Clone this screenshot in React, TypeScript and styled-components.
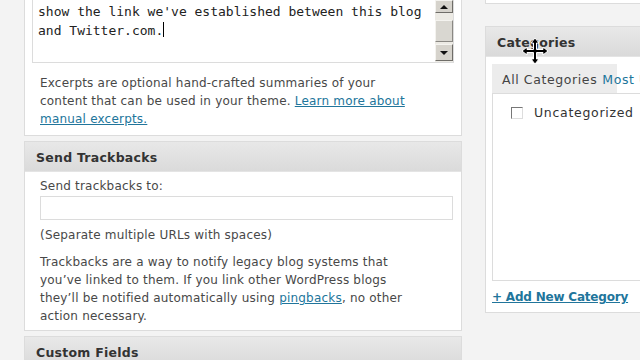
import React from "react";
import styled, { createGlobalStyle } from "styled-components";

const Global = createGlobalStyle`
  html, body { margin: 0; padding: 0; background: #f3f3f3; overflow: hidden; }
  body { font-family: "DejaVu Sans", Verdana, sans-serif; color: #333; }
`;

const Page = styled.div`
  display: flex;
  align-items: flex-start;
  gap: 23px;
  padding-left: 24px;
  width: 640px;
  height: 360px;
  overflow: hidden;
  box-sizing: border-box;
`;

const LeftCol = styled.div`
  width: 438px;
  flex: none;
  display: flex;
  flex-direction: column;
  gap: 5px;
`;

const RightCol = styled.div`
  flex: none;
  width: 200px;
  display: flex;
  flex-direction: column;
  gap: 22px;
`;

const Panel = styled.div<{ $noTop?: boolean }>`
  background: #fff;
  border: 1px solid #dcdcdc;
  border-top: ${(p) => (p.$noTop ? "none" : "1px solid #dcdcdc")};
  box-sizing: border-box;
`;

const PanelHeader = styled.div`
  height: 30px;
  display: flex;
  align-items: center;
  padding-left: 11px;
  padding-top: 2px;
  box-sizing: border-box;
  background: linear-gradient(#e8e8e8, #dadada);
  border-bottom: 1px solid #e4e4e4;
  font-weight: bold;
  font-size: 12.5px;
  letter-spacing: 0.25px;
  color: #333;
`;

const TextAreaBox = styled.div`
  margin: 0 7px 0 7px;
  display: flex;
  border: 1px solid #dcdcdc;
  border-top: none;
`;

const TextAreaText = styled.div`
  flex: 1;
  padding: 2px 0 21px 5px;
  font-family: "DejaVu Sans Mono", monospace;
  font-size: 13px;
  line-height: 19px;
  color: #222;
`;

const Caret = styled.span`
  display: inline-block;
  width: 1px;
  height: 15px;
  background: #000;
  vertical-align: -2px;
`;

const ScrollBar = styled.div`
  width: 18px;
  display: flex;
  flex-direction: column;
  background: #eceae4;
  padding-bottom: 1px;
`;

const ScrollBtn = styled.div<{ $h: number }>`
  height: ${(p) => p.$h}px;
  box-sizing: border-box;
  background: #d6d3cc;
  border: 1px solid;
  border-color: #f4f3ef #6f6d68 #6f6d68 #f4f3ef;
  display: flex;
  align-items: center;
  justify-content: center;
`;

const Thumb = styled.div`
  height: 22px;
  margin: 7px 0 2px;
  box-sizing: border-box;
  background: #d9d7d1;
  border: 1px solid;
  border-color: #f4f3ef #8a8883 #8a8883 #f4f3ef;
`;

const Arrow = styled.div<{ $up?: boolean }>`
  width: 0;
  height: 0;
  border-left: 4px solid transparent;
  border-right: 4px solid transparent;
  ${(p) => (p.$up ? "border-bottom: 4px solid #111;" : "border-top: 4px solid #111;")}
`;

const Body = styled.div<{ $pad: string; $ls: number }>`
  padding: ${(p) => p.$pad};
  font-size: 12px;
  letter-spacing: ${(p) => p.$ls}px;
  color: #484848;
  white-space: nowrap;
`;

const Para = styled.p<{ $mt?: number }>`
  margin: ${(p) => p.$mt ?? 0}px 0 0;
  line-height: 18px;
`;

const Link = styled.a`
  color: #21759b;
  text-decoration: underline;
`;

const Input = styled.div`
  height: 24px;
  margin: 1px 0 0;
  border: 1px solid #dcdcdc;
  box-sizing: border-box;
  background: #fff;
`;

const TopStub = styled(Panel)`
  height: 4px;
  border-top: none;
  margin-right: -20px;
`;

const CatPanel = styled(Panel)`
  position: relative;
  margin-right: -20px;
  height: 287px;
`;

const CatBody = styled.div`
  padding: 7px 0 0 6px;
`;

const Tabs = styled.div`
  display: flex;
  align-items: center;
  height: 29px;
  white-space: nowrap;
  font-size: 12.5px;
  letter-spacing: 0.6px;
  padding-top: 1px;
  box-sizing: border-box;
  background: linear-gradient(to right, #ececec 125px, transparent 125px);
`;

const Tab = styled.span<{ $active?: boolean }>`
  padding-left: ${(p) => (p.$active ? "10px" : "5px")};
  color: ${(p) => (p.$active ? "#444" : "#21759b")};
`;

const TabPanel = styled.div`
  height: 188px;
  border: 1px solid #dcdcdc;
  border-right: none;
  box-sizing: border-box;
  padding: 11px 0 0 18px;
`;

const CheckRow = styled.label`
  display: flex;
  align-items: center;
  gap: 11px;
  font-size: 12.5px;
  letter-spacing: 0.7px;
  color: #333;
  white-space: nowrap;
`;

const Box = styled.span`
  width: 12px;
  height: 12px;
  box-sizing: border-box;
  border: 1px solid #777;
  border-right-color: #ddd;
  border-bottom-color: #ddd;
  background: #fff;
`;

const AddLink = styled.a`
  display: block;
  margin-top: 9px;
  font-weight: bold;
  font-size: 12px;
  letter-spacing: -0.2px;
  color: #21759b;
  text-decoration: underline;
  white-space: nowrap;
`;

const MoveCursor = styled.svg`
  position: absolute;
  left: 34px;
  top: 10px;
`;

export default function App() {
  return (
    <>
      <Global />
      <Page>
        <LeftCol>
          <Panel $noTop>
            <TextAreaBox>
              <TextAreaText>
                show the link we've established between this blog
                <br />
                and Twitter.com.<Caret />
              </TextAreaText>
              <ScrollBar>
                <ScrollBtn $h={13}>
                  <Arrow $up />
                </ScrollBtn>
                <Thumb />
                <ScrollBtn $h={17}>
                  <Arrow />
                </ScrollBtn>
              </ScrollBar>
            </TextAreaBox>
            <Body $pad="3px 8px 7px 15px" $ls={0.2}>
              <Para $mt={8}>
                Excerpts are optional hand-crafted summaries of your
                <br />
                content that can be used in your theme.{" "}
                <Link href="#">
                  Learn more about
                  <br />
                  manual excerpts.
                </Link>
              </Para>
            </Body>
          </Panel>

          <Panel>
            <PanelHeader>Send Trackbacks</PanelHeader>
            <Body $pad="5px 8px 5px 15px" $ls={0.2}>
              <Para>Send trackbacks to:</Para>
              <Input />
              <Para $mt={6}>(Separate multiple URLs with spaces)</Para>
              <Para $mt={9}>
                Trackbacks are a way to notify legacy blog systems that
                <br />
                you’ve linked to them. If you link other WordPress blogs
                <br />
                they’ll be notified automatically using{" "}
                <Link href="#">pingbacks</Link>, no other
                <br />
                action necessary.
              </Para>
            </Body>
          </Panel>

          <Panel>
            <PanelHeader>Custom Fields</PanelHeader>
          </Panel>
        </LeftCol>

        <RightCol>
          <TopStub />
          <CatPanel>
            <PanelHeader>Categories</PanelHeader>
            <CatBody>
              <Tabs>
                <Tab $active>All Categories</Tab>
                <Tab>Most Used</Tab>
              </Tabs>
              <TabPanel>
                <CheckRow>
                  <Box />
                  Uncategorized
                </CheckRow>
              </TabPanel>
              <AddLink href="#">+ Add New Category</AddLink>
            </CatBody>
            <MoveCursor width="30" height="28" viewBox="0 0 30 28">
              <path
                d="M15 1 L19 6 H16.5 V12.5 H23 V10 L28 14 L23 18 V15.5 H16.5 V22 H19 L15 27 L11 22 H13.5 V15.5 H7 V18 L2 14 L7 10 V12.5 H13.5 V6 H11 Z"
                fill="#000"
                stroke="#fff"
                strokeWidth="1"
              />
            </MoveCursor>
          </CatPanel>
        </RightCol>
      </Page>
    </>
  );
}
